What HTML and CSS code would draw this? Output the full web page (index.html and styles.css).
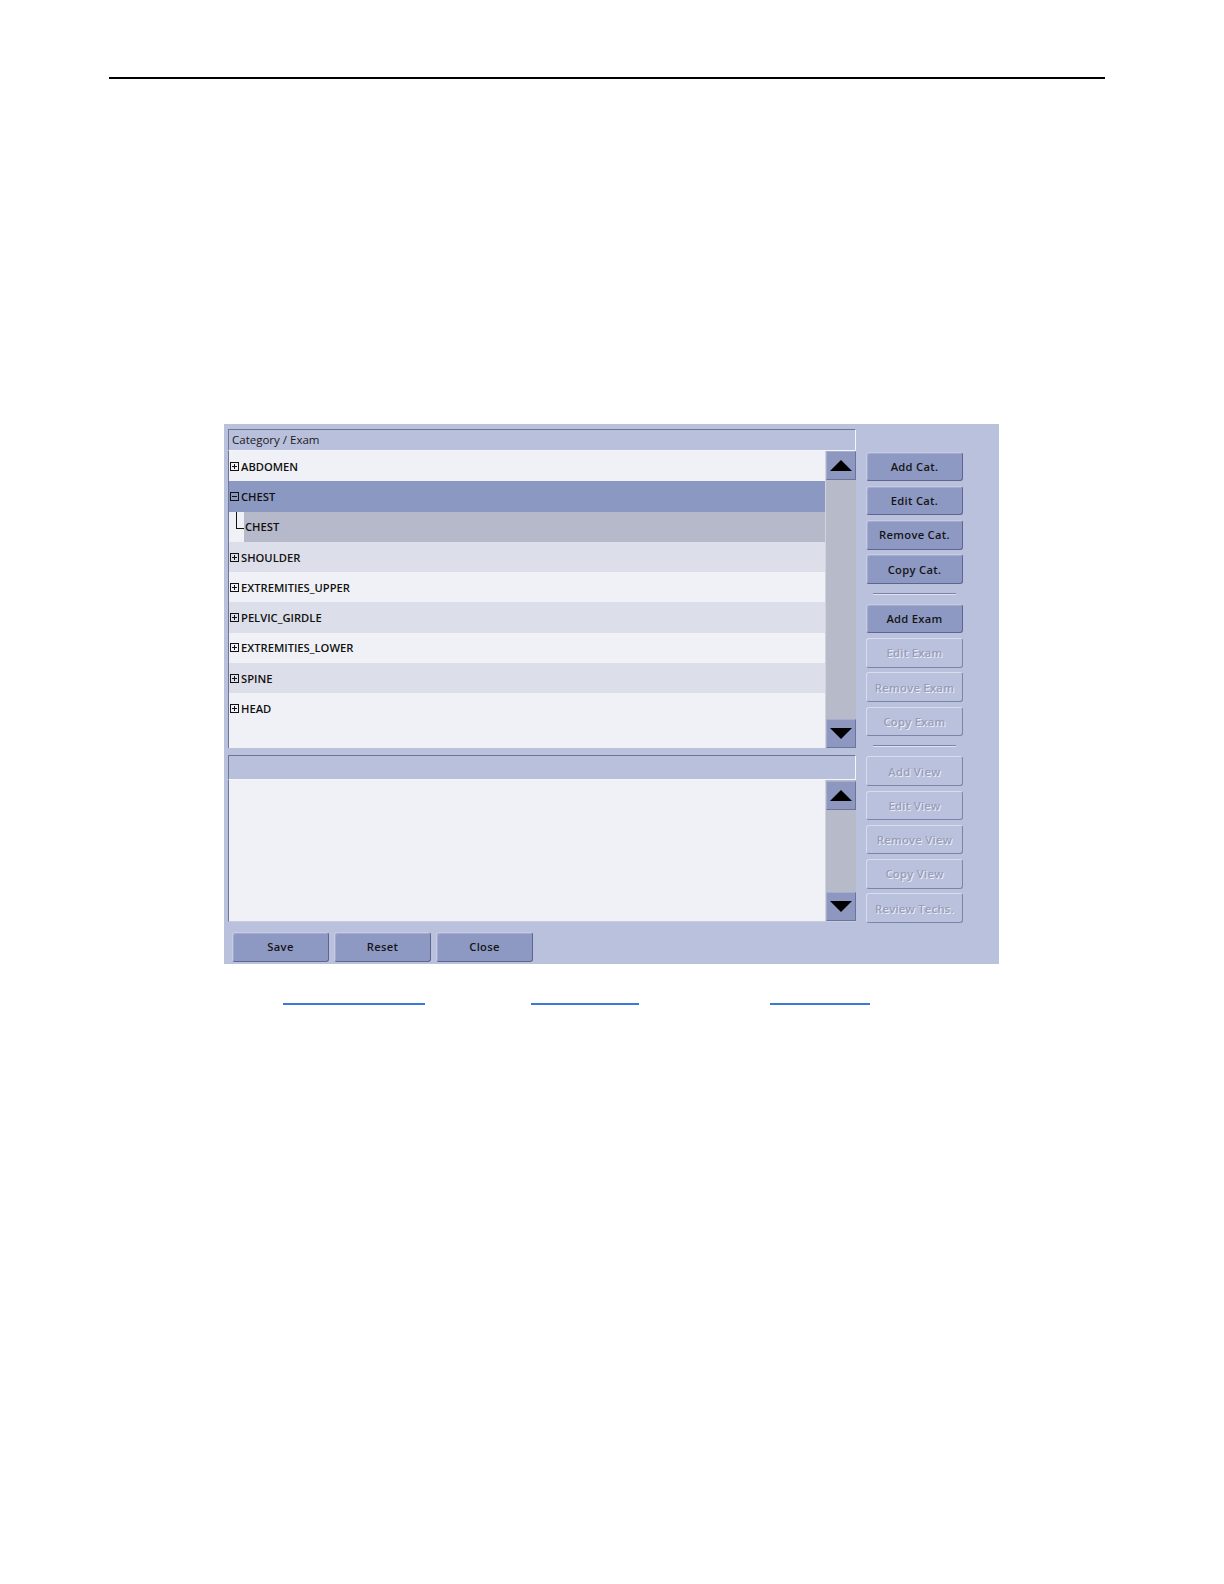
FILE: index.html
```html
<!DOCTYPE html>
<html>
<head>
<meta charset="utf-8">
<title>Category / Exam</title>
<link rel="stylesheet" href="styles.css">
</head>
<body>
<div class="rule"></div>

<div class="dialog">
  <div class="main">
    <div class="left">
      <div class="field-head">Category / Exam</div>
      <div class="listbox top-list">
        <div class="rows">
          <div class="row r-light"><span class="box"><svg width="9" height="9" viewBox="0 0 9 9"><rect x="0.5" y="0.5" width="8" height="8" fill="none" stroke="#111"/><path d="M2 4.5H7M4.5 2V7" stroke="#111"/></svg></span>ABDOMEN</div>
          <div class="row r-sel"><span class="box"><svg width="9" height="9" viewBox="0 0 9 9"><rect x="0.5" y="0.5" width="8" height="8" fill="none" stroke="#111"/><path d="M2 4.5H7" stroke="#111"/></svg></span>CHEST</div>
          <div class="row r-child"><span class="tree"></span><span class="child-label">CHEST</span></div>
          <div class="row r-gray"><span class="box"><svg width="9" height="9" viewBox="0 0 9 9"><rect x="0.5" y="0.5" width="8" height="8" fill="none" stroke="#111"/><path d="M2 4.5H7M4.5 2V7" stroke="#111"/></svg></span>SHOULDER</div>
          <div class="row r-light"><span class="box"><svg width="9" height="9" viewBox="0 0 9 9"><rect x="0.5" y="0.5" width="8" height="8" fill="none" stroke="#111"/><path d="M2 4.5H7M4.5 2V7" stroke="#111"/></svg></span>EXTREMITIES_UPPER</div>
          <div class="row r-gray"><span class="box"><svg width="9" height="9" viewBox="0 0 9 9"><rect x="0.5" y="0.5" width="8" height="8" fill="none" stroke="#111"/><path d="M2 4.5H7M4.5 2V7" stroke="#111"/></svg></span>PELVIC_GIRDLE</div>
          <div class="row r-light"><span class="box"><svg width="9" height="9" viewBox="0 0 9 9"><rect x="0.5" y="0.5" width="8" height="8" fill="none" stroke="#111"/><path d="M2 4.5H7M4.5 2V7" stroke="#111"/></svg></span>EXTREMITIES_LOWER</div>
          <div class="row r-gray"><span class="box"><svg width="9" height="9" viewBox="0 0 9 9"><rect x="0.5" y="0.5" width="8" height="8" fill="none" stroke="#111"/><path d="M2 4.5H7M4.5 2V7" stroke="#111"/></svg></span>SPINE</div>
          <div class="row r-light"><span class="box"><svg width="9" height="9" viewBox="0 0 9 9"><rect x="0.5" y="0.5" width="8" height="8" fill="none" stroke="#111"/><path d="M2 4.5H7M4.5 2V7" stroke="#111"/></svg></span>HEAD</div>
        </div>
        <div class="scrollbar">
          <div class="sbtn"><svg width="22" height="11" viewBox="0 0 22 11"><path d="M11 0L22 11H0Z" fill="#000"/></svg></div>
          <div class="track"></div>
          <div class="sbtn"><svg width="22" height="11" viewBox="0 0 22 11"><path d="M0 0H22L11 11Z" fill="#000"/></svg></div>
        </div>
      </div>

      <div class="field-head lower-head"></div>
      <div class="listbox bottom-list">
        <div class="rows"></div>
        <div class="scrollbar">
          <div class="sbtn"><svg width="22" height="11" viewBox="0 0 22 11"><path d="M11 0L22 11H0Z" fill="#000"/></svg></div>
          <div class="track"></div>
          <div class="sbtn"><svg width="22" height="11" viewBox="0 0 22 11"><path d="M0 0H22L11 11Z" fill="#000"/></svg></div>
        </div>
      </div>
    </div>

    <div class="side">
      <button class="btn">Add Cat.</button>
      <button class="btn">Edit Cat.</button>
      <button class="btn">Remove Cat.</button>
      <button class="btn">Copy Cat.</button>
      <div class="sep"></div>
      <button class="btn">Add Exam</button>
      <button class="btn off">Edit Exam</button>
      <button class="btn off">Remove Exam</button>
      <button class="btn off">Copy Exam</button>
      <div class="sep"></div>
      <button class="btn off">Add View</button>
      <button class="btn off">Edit View</button>
      <button class="btn off">Remove View</button>
      <button class="btn off">Copy View</button>
      <button class="btn off">Review Techs.</button>
    </div>
  </div>

  <div class="footer">
    <button class="btn">Save</button>
    <button class="btn">Reset</button>
    <button class="btn">Close</button>
  </div>
</div>

<div class="links">
  <a class="link l1" href="#"></a>
  <a class="link l2" href="#"></a>
  <a class="link l3" href="#"></a>
</div>
</body>
</html>
```

FILE: styles.css
```css
html, body {
  margin: 0;
  padding: 0;
  background: #ffffff;
}

body {
  padding-top: 77px;
  font-family: "Open Sans", "DejaVu Sans", sans-serif;
  color: #111;
}

.rule {
  margin: 0 0 0 109px;
  width: 996px;
  height: 2px;
  background: #000;
}

.dialog {
  margin: 345px 0 0 224px;
  width: 775px;
  height: 540px;
  box-sizing: border-box;
  background: #bac1dc;
  padding: 5px 0 0 4px;
  display: flex;
  flex-direction: column;
}

.main {
  display: flex;
  gap: 10px;
}

.left {
  width: 628px;
  display: flex;
  flex-direction: column;
}

.field-head {
  height: 22px;
  box-sizing: border-box;
  background: #b9c0dc;
  border-top: 1px solid #6f7595;
  border-left: 1px solid #6f7595;
  border-right: 1px solid #f4f5fa;
  border-bottom: 1px solid #f4f5fa;
  font-size: 11.5px;
  line-height: 20px;
  padding-left: 3px;
  color: #1a1a1a;
}

.listbox {
  display: flex;
  border-left: 1px solid #6f7595;
}

.top-list {
  height: 297px;
}

.rows {
  flex: 1;
  background: #eff1f7;
  overflow: hidden;
}

.row {
  height: 30.3px;
  display: flex;
  align-items: center;
  font-size: 11.2px;
  font-weight: 600;
  padding-left: 1px;
  color: #111;
}

.r-light { background: #eff1f7; }
.r-gray { background: #dcdfe9; }
.r-sel { background: #8b99c2; }

.r-child {
  background: #eff1f7;
  padding-left: 0;
  align-items: stretch;
}

.tree {
  width: 8px;
  margin-left: 7px;
  height: 17px;
  border-left: 1px solid #111;
  border-bottom: 1px solid #111;
  box-sizing: border-box;
}

.child-label {
  flex: 1;
  background: #b5b9c9;
  display: flex;
  align-items: center;
  padding-left: 1px;
}

.box {
  display: inline-flex;
  width: 9px;
  height: 9px;
  margin-right: 2px;
}

.box svg { display: block; }

.scrollbar {
  width: 30px;
  display: flex;
  flex-direction: column;
  background: #b7bac8;
  border-left: 1px solid #d0d3de;
}

.sbtn {
  height: 29px;
  box-sizing: border-box;
  background: #8d97bf;
  border-top: 1px solid #a6aed0;
  border-left: 1px solid #a6aed0;
  border-right: 1px solid #6c7499;
  border-bottom: 1px solid #6c7499;
  display: flex;
  align-items: center;
  justify-content: center;
}

.sbtn svg { display: block; }

.track { flex: 1; }

.lower-head {
  margin-top: 7px;
  height: 25px;
}

.bottom-list {
  height: 141px;
  border-bottom: 1px solid #c8ccdc;
}

.bottom-list .scrollbar .sbtn:first-child { margin-top: 1px; }

.side {
  width: 97px;
  display: flex;
  flex-direction: column;
  gap: 4.8px;
  padding-top: 22.5px;
}

.btn {
  height: 29.5px;
  width: 97px;
  box-sizing: border-box;
  border-radius: 3px;
  border: 1px solid #5d6590;
  border-top-color: #c7cce3;
  border-left-color: #c7cce3;
  background: #8e99c3;
  color: #151515;
  font-family: "Open Sans", "DejaVu Sans", sans-serif;
  font-size: 11.2px;
  font-weight: 600;
  letter-spacing: 0.3px;
  padding: 0;
  margin: 0;
  box-shadow: inset 1px 1px 0 #a3acd0;
}

.btn.off {
  background: #bac1dc;
  color: #979dba;
  border-color: #7d84a8;
  border-top-color: #d8dcec;
  border-left-color: #d8dcec;
  text-shadow: 1px 1px 0 #eceef6;
  box-shadow: none;
}

.sep {
  height: 1px;
  margin: 4px 7px 4.4px 7px;
  background: #7b82a6;
  border-bottom: 1px solid #e0e3ef;
}

.footer {
  display: flex;
  gap: 5px;
  padding: 9px 0 0 4px;
}

.footer .btn {
  width: 97px;
  height: 30px;
}

.links {
  position: relative;
  height: 20px;
  margin-top: 21px;
}

.link {
  position: absolute;
  top: 18px;
  height: 0;
  border-bottom: 2px solid #3c78d8;
}

.l1 { left: 283px; width: 142px; }
.l2 { left: 531px; width: 108px; }
.l3 { left: 770px; width: 100px; }
```
